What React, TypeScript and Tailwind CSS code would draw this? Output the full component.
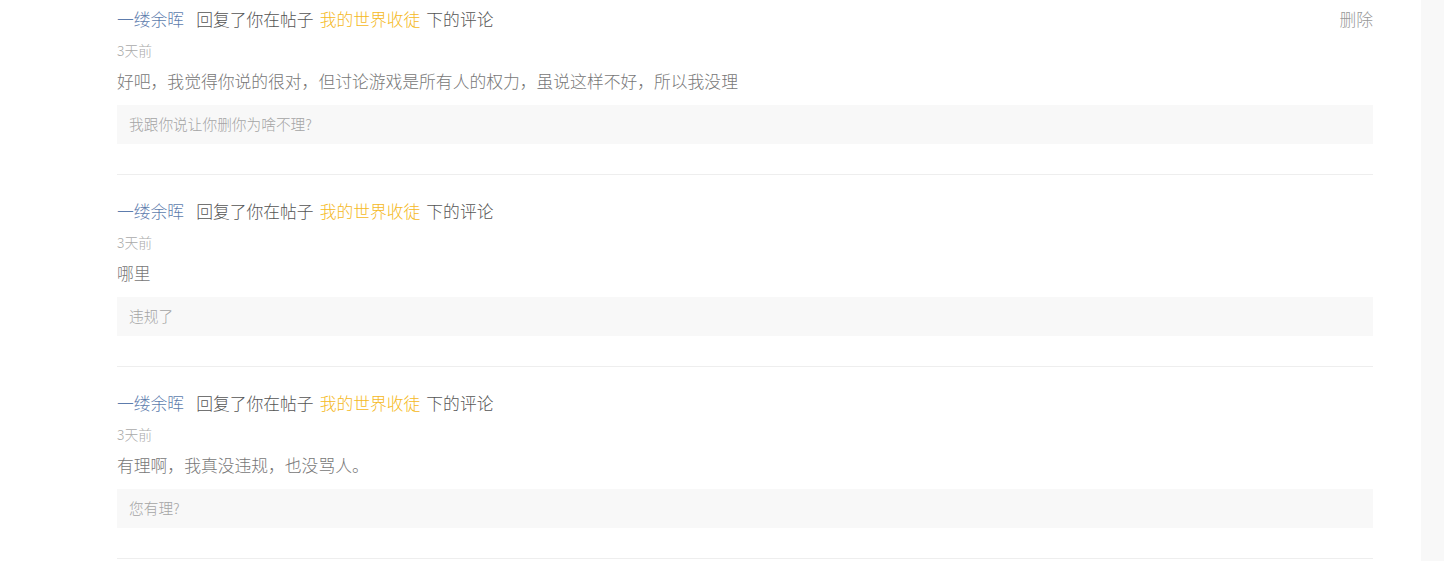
import React from "react";

const items = [
  {
    content: "好吧，我觉得你说的很对，但讨论游戏是所有人的权力，虽说这样不好，所以我没理",
    reply: "我跟你说让你删你为啥不理?",
    del: true,
  },
  { content: "哪里", reply: "违规了", del: false },
  { content: "有理啊，我真没违规，也没骂人。", reply: "您有理?", del: false },
];

export default function App() {
  return (
    <div
      className="flex h-[561px] w-full overflow-hidden bg-white font-light"
      style={{ fontFamily: '"Microsoft YaHei", "Noto Sans CJK SC", "Noto Sans", sans-serif' }}
    >
      <div className="flex-1 pl-[117px] pr-[48px]">
        {items.map((it, i) => (
          <div
            key={i}
            className={`${i === 0 ? "pt-[7px]" : "pt-[24px]"} pb-[30px] border-b border-[#eeeeee]`}
          >
            <div className="flex items-center justify-between h-[24px] text-[16.8px] leading-[24px]">
              <div className="flex items-center whitespace-nowrap">
                <span className="text-[#5d7cad] mr-[12px]">一缕余晖</span>
                <span className="text-[#555555]">回复了你在帖子</span>
                <span className="text-[#f5b923] mx-[6px]">我的世界收徒</span>
                <span className="text-[#555555]">下的评论</span>
              </div>
              {it.del && <span className="text-[#999999] cursor-pointer">删除</span>}
            </div>
            <div className="mt-[9px] h-[20px] text-[13.8px] leading-[20px] text-[#aaaaaa]">3天前</div>
            <div className="mt-[9px] h-[24px] text-[16.8px] leading-[24px] text-[#777777] whitespace-nowrap">
              {it.content}
            </div>
            <div className="mt-[12px] h-[39px] bg-[#f8f8f8] px-[12px] flex items-center text-[14.7px] text-[#a5a5a5]">
              {it.reply}
            </div>
          </div>
        ))}
      </div>
      <div className="w-[23px] bg-[#f8f8f8]" />
    </div>
  );
}
